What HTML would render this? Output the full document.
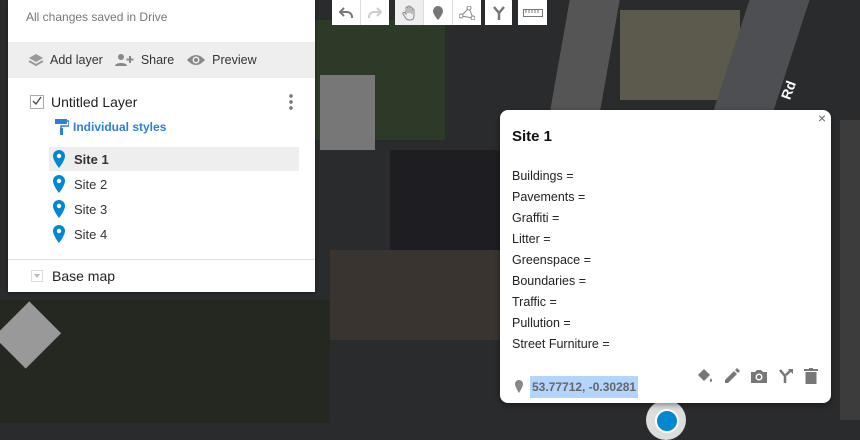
<!DOCTYPE html>
<html><head><style>
body{margin:0;width:860px;height:423px;overflow:hidden;position:relative;background:#2a2b2c;font-family:"Liberation Sans",sans-serif}
.b{position:absolute}
.panel{position:absolute;left:8px;top:0;width:307px;height:292px;background:#fff;box-shadow:0 1px 3px rgba(0,0,0,.4)}
.tb{position:absolute;top:0;height:25px;background:#fff;display:flex}
.tb div{width:28px;height:25px;display:flex;align-items:center;justify-content:center;border-right:1px solid #ddd}
.pop{position:absolute;left:500px;top:110px;width:331px;height:293px;background:#fff;border-radius:8px;box-shadow:0 2px 6px rgba(0,0,0,.4)}
.pop .f{position:absolute;left:12px;font-size:12.5px;color:#222}
.site{position:absolute;left:41px;height:24px;width:250px;font-size:13px;color:#333;display:flex;align-items:center}
.site svg{margin:0 9px 0 4px}
</style></head><body>
<div class="b" style="left:315px;top:20px;width:130px;height:120px;background:#2e3a28"></div>
<div class="b" style="left:320px;top:75px;width:55px;height:75px;background:#777"></div>
<div class="b" style="left:560px;top:0;width:50px;height:110px;background:#555;transform:skewX(-10deg)"></div>
<div class="b" style="left:620px;top:10px;width:120px;height:90px;background:#5c5a4c"></div>
<div class="b" style="left:730px;top:0;width:60px;height:120px;background:#4d4f52;transform:skewX(-18deg)"></div>
<div class="b" style="left:390px;top:150px;width:110px;height:160px;background:#1e1e22"></div>
<div class="b" style="left:330px;top:250px;width:170px;height:90px;background:#3a3430"></div>
<div class="b" style="left:0;top:300px;width:330px;height:123px;background:#252821"></div>
<div class="b" style="left:5px;top:310px;width:45px;height:50px;background:#999;transform:rotate(45deg)"></div>
<div class="b" style="left:840px;top:120px;width:20px;height:300px;background:#3c3c3c"></div>
<div class="b" style="left:779px;top:82px;color:#fff;font-size:14px;font-weight:bold;transform:rotate(-70deg)">Rd</div>

<div class="panel">
 <div class="b" style="left:18px;top:10px;font-size:12px;color:#777">All changes saved in Drive</div>
 <div class="b" style="left:0;top:42px;width:307px;height:36px;background:#eee"></div>
 <div class="b" style="left:20px;top:53px;font-size:12.5px;color:#333;display:flex;align-items:center;gap:6px">
  <svg width="16" height="14" viewBox="0 0 16 14"><path d="M8 1L1 5l7 4 7-4z" fill="#999"/><path d="M1 8l7 4 7-4" stroke="#999" stroke-width="2" fill="none"/></svg>Add layer
  <svg width="20" height="14" viewBox="0 0 20 14" style="margin-left:6px"><circle cx="6" cy="4" r="3" fill="#888"/><path d="M0 13c0-4 12-4 12 0z" fill="#888"/><path d="M15 3v7M11.5 6.5h7" stroke="#888" stroke-width="2"/></svg>Share
  <svg width="20" height="14" viewBox="0 0 20 14" style="margin-left:6px"><path d="M1 7Q10-3 19 7Q10 17 1 7z" fill="#888"/><circle cx="10" cy="7" r="3.5" fill="#eee"/><circle cx="10" cy="7" r="2" fill="#888"/></svg>Preview
 </div>
 <div class="b" style="left:22px;top:95px;width:12px;height:12px;border:1px solid #aaa"></div>
 <svg class="b" style="left:24px;top:96px" width="10" height="10"><path d="M1 5l3 3 5-7" stroke="#444" stroke-width="1.3" fill="none"/></svg>
 <div class="b" style="left:43px;top:94px;font-size:14px;color:#222">Untitled Layer</div>
 <div class="b" style="left:281px;top:93px;width:4px;height:18px;background:radial-gradient(circle,#777 1.6px,transparent 2px) 0 0/4px 6px"></div>
 <svg class="b" style="left:47px;top:119px" width="14" height="16" viewBox="0 0 14 16"><rect x="0" y="0" width="12" height="5" fill="#2f7de1"/><path d="M12 2h2v5H6v3" stroke="#2f7de1" stroke-width="1.5" fill="none"/><rect x="5" y="9" width="3" height="7" fill="#2f7de1"/></svg>
 <div class="b" style="left:65px;top:120px;font-size:12px;color:#2f7de1;font-weight:bold">Individual styles</div>
 <div class="b" style="left:41px;top:147px;width:250px;height:24px;background:#eee"></div>
 <div class="site" style="top:147px;font-weight:bold"><svg width="12" height="18" viewBox="0 0 12 18"><path d="M6 0a6 6 0 0 0-6 6c0 4.5 6 12 6 12s6-7.5 6-12a6 6 0 0 0-6-6z" fill="#0288d1"/><circle cx="6" cy="6" r="2.2" fill="#fff"/></svg>Site 1</div>
 <div class="site" style="top:172px"><svg width="12" height="18" viewBox="0 0 12 18"><path d="M6 0a6 6 0 0 0-6 6c0 4.5 6 12 6 12s6-7.5 6-12a6 6 0 0 0-6-6z" fill="#0288d1"/><circle cx="6" cy="6" r="2.2" fill="#fff"/></svg>Site 2</div>
 <div class="site" style="top:197px"><svg width="12" height="18" viewBox="0 0 12 18"><path d="M6 0a6 6 0 0 0-6 6c0 4.5 6 12 6 12s6-7.5 6-12a6 6 0 0 0-6-6z" fill="#0288d1"/><circle cx="6" cy="6" r="2.2" fill="#fff"/></svg>Site 3</div>
 <div class="site" style="top:222px"><svg width="12" height="18" viewBox="0 0 12 18"><path d="M6 0a6 6 0 0 0-6 6c0 4.5 6 12 6 12s6-7.5 6-12a6 6 0 0 0-6-6z" fill="#0288d1"/><circle cx="6" cy="6" r="2.2" fill="#fff"/></svg>Site 4</div>
 <div class="b" style="left:0;top:259px;width:307px;height:1px;background:#ddd"></div>
 <div class="b" style="left:23px;top:270px;width:10px;height:10px;border:1px solid #ddd"></div>
 <div class="b" style="left:26px;top:274px;border:3px solid transparent;border-top:4px solid #bbb"></div>
 <div class="b" style="left:44px;top:268px;font-size:14px;color:#222">Base map</div>
</div>

<div class="tb" style="left:332px"><div><svg width="14" height="12" viewBox="0 0 14 12"><path d="M5 1L1 5l4 4M1 5h7a5 5 0 0 1 5 5v1" stroke="#777" stroke-width="2" fill="none"/></svg></div><div style="border:none"><svg width="14" height="12" viewBox="0 0 14 12"><path d="M9 1l4 4-4 4M13 5H6a5 5 0 0 0-5 5v1" stroke="#ccc" stroke-width="2" fill="none"/></svg></div></div>
<div class="tb" style="left:395px"><div style="background:#eee"><svg width="14" height="16" viewBox="0 0 14 16"><path d="M4 9V3a1 1 0 0 1 2 0v5V2a1 1 0 0 1 2 0v6V3a1 1 0 0 1 2 0v6V5a1 1 0 0 1 2 0v6c0 3-2 4-4 4H7c-2 0-3-1-4-3L1 9a1 1 0 0 1 2-1z" stroke="#888" fill="none"/></svg></div><div><svg width="10" height="14" viewBox="0 0 10 14"><path d="M5 0a5 5 0 0 0-5 5c0 3.5 5 9 5 9s5-5.5 5-9a5 5 0 0 0-5-5z" fill="#777"/></svg></div><div style="border:none"><svg width="16" height="14" viewBox="0 0 16 14"><path d="M2 10L10 2l4 10z" stroke="#888" fill="none"/><circle cx="2" cy="10" r="2" fill="#fff" stroke="#888"/><circle cx="10" cy="2" r="2" fill="#fff" stroke="#888"/><circle cx="14" cy="12" r="2" fill="#fff" stroke="#888"/></svg></div></div>
<div class="tb" style="left:485px"><div style="border:none;width:27px"><svg width="14" height="14" viewBox="0 0 14 14"><path d="M2 1l5 6v7M12 1L7 7" stroke="#777" stroke-width="2.5" fill="none"/></svg></div></div>
<div class="tb" style="left:518px"><div style="border:none;width:29px"><svg width="20" height="8"><rect x="0.5" y="0.5" width="19" height="7" fill="none" stroke="#777"/><path d="M3 1v3M6 1v3M9 1v3M12 1v3M15 1v3" stroke="#777"/></svg></div></div>

<div class="b" style="left:646px;top:400px;width:40px;height:40px;border-radius:50%;background:#ddd"></div>
<div class="b" style="left:655px;top:409px;width:20px;height:20px;border-radius:50%;background:#0288d1;border:2px solid #fff"></div>
<div class="pop">
 <div class="b" style="right:5px;top:0;font-size:14px;color:#666">×</div>
 <div class="b" style="left:12px;top:18px;font-size:15px;font-weight:bold;color:#111">Site 1</div>
 <div class="f" style="top:59px">Buildings =</div>
 <div class="f" style="top:80px">Pavements =</div>
 <div class="f" style="top:101px">Graffiti =</div>
 <div class="f" style="top:122px">Litter =</div>
 <div class="f" style="top:143px">Greenspace =</div>
 <div class="f" style="top:164px">Boundaries =</div>
 <div class="f" style="top:185px">Traffic =</div>
 <div class="f" style="top:206px">Pullution =</div>
 <div class="f" style="top:227px">Street Furniture =</div>
 <svg class="b" style="left:15px;top:270px" width="8" height="13" viewBox="0 0 8 13"><path d="M4 0a4 4 0 0 0-4 4c0 3 4 9 4 9s4-6 4-9a4 4 0 0 0-4-4z" fill="#888"/></svg>
 <div class="b" style="left:30px;top:266px;height:22px;padding:0 2px;background:#b3d4fc;font-size:12px;font-weight:bold;color:#666;line-height:22px">53.77712, -0.30281</div>
 <div class="b" style="left:196px;top:258px;display:flex;gap:10px;align-items:center">
  <svg width="18" height="16" viewBox="0 0 18 16"><path d="M2 7l6-6 6 6-6 6z" fill="#777"/><path d="M15 10c-1 2-2 3 0 4 2-1 1-2 0-4z" fill="#777"/></svg>
  <svg width="16" height="16" viewBox="0 0 16 16"><path d="M1 15v-3l9-9 3 3-9 9z M11 2l2-2 3 3-2 2z" fill="#777"/></svg>
  <svg width="18" height="16" viewBox="0 0 18 16"><path d="M1 4h4l2-2h4l2 2h4v11H1z" fill="#777"/><circle cx="9" cy="9" r="3.5" fill="#fff"/><circle cx="9" cy="9" r="2" fill="#777"/></svg>
  <svg width="16" height="16" viewBox="0 0 16 16"><path d="M2 2l5 6v7M13 2L8 7" stroke="#777" stroke-width="2.5" fill="none"/><path d="M10 1h5v5z" fill="#777"/></svg>
  <svg width="14" height="16" viewBox="0 0 14 16"><rect x="0" y="1" width="14" height="2" fill="#777"/><rect x="5" y="0" width="4" height="2" fill="#777"/><rect x="1.5" y="4" width="11" height="12" fill="#777"/></svg>
 </div>
</div>
</body></html>
